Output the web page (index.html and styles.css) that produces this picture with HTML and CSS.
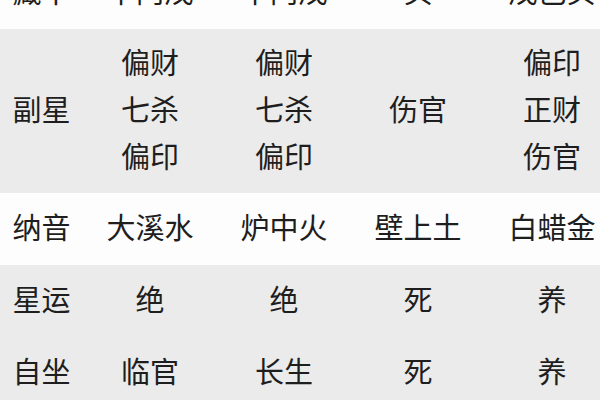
FILE: index.html
```html
<!DOCTYPE html>
<html lang="zh-CN">
<head>
<meta charset="utf-8">
<title>八字排盘</title>
<link rel="stylesheet" href="styles.css">
</head>
<body>
<div class="chart">
  <div class="row row-white row-top">
    <div class="cell label">藏干</div>
    <div class="cell">甲丙戊</div>
    <div class="cell">甲丙戊</div>
    <div class="cell">癸</div>
    <div class="cell">戊己癸</div>
  </div>
  <div class="row row-gray row-tall">
    <div class="cell label">副星</div>
    <div class="cell stack"><span>偏财</span><span>七杀</span><span>偏印</span></div>
    <div class="cell stack"><span>偏财</span><span>七杀</span><span>偏印</span></div>
    <div class="cell stack"><span>伤官</span></div>
    <div class="cell stack"><span>偏印</span><span>正财</span><span>伤官</span></div>
  </div>
  <div class="row row-white">
    <div class="cell label">纳音</div>
    <div class="cell">大溪水</div>
    <div class="cell">炉中火</div>
    <div class="cell">壁上土</div>
    <div class="cell">白蜡金</div>
  </div>
  <div class="row row-gray">
    <div class="cell label">星运</div>
    <div class="cell">绝</div>
    <div class="cell">绝</div>
    <div class="cell">死</div>
    <div class="cell">养</div>
  </div>
  <div class="row row-gray">
    <div class="cell label">自坐</div>
    <div class="cell">临官</div>
    <div class="cell">长生</div>
    <div class="cell">死</div>
    <div class="cell">养</div>
  </div>
</div>
</body>
</html>
```

FILE: styles.css
```css
html, body {
  margin: 0;
  padding: 0;
  background: #fdfdfd;
  overflow: hidden;
}

.chart {
  width: 619px;
  margin-top: -43px;
  font-family: "Noto Sans CJK SC", "Noto Sans", sans-serif;
  font-size: 29px;
  color: #1e1e1e;
}

.row {
  display: grid;
  grid-template-columns: 83px repeat(4, 134px);
  height: 72px;
  align-items: center;
}

.row-white {
  background: #fdfdfd;
}

.row-gray {
  background: #ebebeb;
}

.row-tall {
  height: 164px;
}

.cell {
  text-align: center;
  line-height: 1;
  white-space: nowrap;
  padding-bottom: 6px;
}

.stack {
  display: flex;
  flex-direction: column;
  align-items: center;
  gap: 18px;
}
```
